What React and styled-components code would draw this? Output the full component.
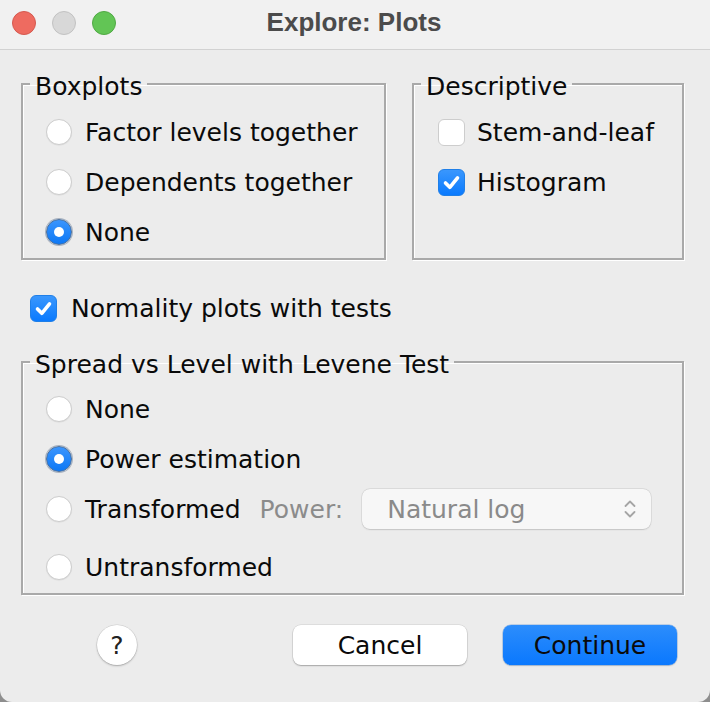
import React from "react"
import styled, { createGlobalStyle } from "styled-components"

const GlobalStyle = createGlobalStyle`
  html, body {
    margin: 0;
    padding: 0;
    background: #8e8e8e;
  }
  body {
    font-family: "DejaVu Sans", "Liberation Sans", sans-serif;
    -webkit-font-smoothing: antialiased;
  }
`

const Window = styled.div`
  width: 710px;
  height: 702px;
  background: #ececec;
  border-radius: 0 0 12px 12px;
  overflow: hidden;
  display: flex;
  flex-direction: column;
`

const TitleBar = styled.div`
  height: 49px;
  flex: none;
  background: #f1f1f1;
  border-bottom: 1px solid #d2d2d2;
  display: flex;
  align-items: center;
`

const Lights = styled.div`
  display: flex;
  gap: 16px;
  padding-left: 12px;
  margin-top: -4px;
`

const Light = styled.span`
  width: 22px;
  height: 22px;
  border-radius: 50%;
  background: ${p => p.$fill};
  border: 1px solid ${p => p.$edge};
`

const Title = styled.div`
  flex: 1;
  text-align: center;
  margin-left: -118px;
  margin-top: -5px;
  font-family: "Liberation Sans", Arial, sans-serif;
  font-weight: 700;
  font-size: 26px;
  color: #4b4b4b;
`

const Content = styled.div`
  flex: 1;
  display: flex;
  flex-direction: column;
  padding: 0 26px 0 21px;
  color: #0a0a0a;
  font-size: 25px;
`

const TopRow = styled.div`
  display: flex;
  gap: 26px;
  margin-top: 19px;
`

const Group = styled.fieldset`
  margin: 0;
  padding: 0;
  min-width: 0;
  border: 2px solid #a9a9a9;
  box-shadow: 1px 1px 0 #ffffff, inset 1px 1px 0 #ffffff;
  width: ${p => (p.$width ? `${p.$width}px` : "auto")};
  flex: ${p => (p.$grow ? "1" : "none")};
  box-sizing: border-box;
  margin-top: ${p => p.$mt || 0}px;
`

const Legend = styled.legend`
  margin-left: 7px;
  padding: 7px 5px 0;
  font-size: 25px;
  line-height: 22px;
`

const GroupBody = styled.div`
  display: flex;
  flex-direction: column;
  padding: ${p => p.$pt}px 12px 1px ${p => p.$pl}px;
`

const Row = styled.div`
  display: flex;
  align-items: center;
  height: 50px;
  gap: ${p => p.$gap || 13}px;
  margin-top: ${p => p.$mt || 0}px;
  flex: none;
  white-space: nowrap;
`

const RadioDot = styled.span`
  width: 26px;
  height: 26px;
  border-radius: 50%;
  box-sizing: border-box;
  flex: none;
  display: flex;
  align-items: center;
  justify-content: center;
  background: ${p => (p.$on ? "linear-gradient(#3b95fd, #0d78f5)" : "#ffffff")};
  border: 1px solid ${p => (p.$on ? "#4a6f9c" : "#cdcdcd")};
  box-shadow: ${p => (p.$on ? "0 0 0 1px rgba(90,110,140,0.45)" : "0 0.5px 1px rgba(0,0,0,0.08)")};

  &::after {
    content: "";
    display: ${p => (p.$on ? "block" : "none")};
    width: 10px;
    height: 10px;
    border-radius: 50%;
    background: #ffffff;
  }
`

const Box = styled.span`
  width: 27px;
  height: 27px;
  border-radius: 6px;
  box-sizing: border-box;
  flex: none;
  display: flex;
  align-items: center;
  justify-content: center;
  background: ${p => (p.$on ? "linear-gradient(#3a97fd, #0a7afe)" : "#ffffff")};
  border: 1px solid ${p => (p.$on ? "#1f7fe8" : "#cdcdcd")};
`

const Check = () => (
  <svg width="19" height="19" viewBox="0 0 19 19">
    <path d="M3.5 10 L7.8 14.3 L15.5 4.8" fill="none" stroke="#fff" strokeWidth="3.6" strokeLinecap="round" strokeLinejoin="round" />
  </svg>
)

const Radio = ({ on, children }) => (
  <Row>
    <RadioDot $on={on} />
    <span>{children}</span>
  </Row>
)

const CheckRow = ({ on, children, gap }) => (
  <Row $gap={gap}>
    <Box $on={on}>{on && <Check />}</Box>
    <span>{children}</span>
  </Row>
)

const NormalityRow = styled.div`
  margin-top: 23px;
  padding-left: 9px;
`

const PowerLabel = styled.span`
  color: #8b8b8b;
  margin-left: 6px;
`

const SelectBox = styled.div`
  flex: 1;
  height: 40px;
  margin-left: 6px;
  margin-right: 19px;
  box-sizing: border-box;
  background: #f7f7f7;
  border-radius: 8px;
  box-shadow: 0 0 0 0.5px rgba(0, 0, 0, 0.1), 0 0.5px 1.5px rgba(0, 0, 0, 0.12);
  display: flex;
  align-items: center;
  justify-content: space-between;
  padding: 0 14px 0 25px;
  color: #8a8a8a;
`

const Chevrons = () => (
  <svg width="14" height="24" viewBox="0 0 14 24">
    <path d="M2.5 9 L7 4.5 L11.5 9 M2.5 15 L7 19.5 L11.5 15" fill="none" stroke="#a5a5a5" strokeWidth="1.8" strokeLinecap="round" strokeLinejoin="round" />
  </svg>
)

const Footer = styled.div`
  display: flex;
  align-items: center;
  padding: 30px 5px 0 76px;
`

const HelpButton = styled.div`
  width: 40px;
  height: 40px;
  border-radius: 50%;
  background: #ffffff;
  box-shadow: 0 0 0 0.5px rgba(0, 0, 0, 0.12), 0 1px 2px rgba(0, 0, 0, 0.25);
  display: flex;
  align-items: center;
  justify-content: center;
  color: #222;
  font-size: 25px;
`

const Button = styled.div`
  width: 174px;
  height: 40px;
  box-sizing: border-box;
  border-radius: 8px;
  display: flex;
  align-items: center;
  justify-content: center;
  font-size: 25px;
  color: #0a0a0a;
  margin-left: ${p => p.$ml}px;
  background: ${p => (p.$primary ? "linear-gradient(#2c8dfc, #0a78fe)" : "#ffffff")};
  box-shadow: ${p =>
    p.$primary
      ? "0 0 0 0.5px rgba(0, 90, 200, 0.4), 0 1px 1.5px rgba(0,0,0,0.15)"
      : "0 0 0 0.5px rgba(0, 0, 0, 0.12), 0 1px 1.5px rgba(0, 0, 0, 0.25)"};
`

export default function App() {
  return (
    <>
      <GlobalStyle />
      <Window>
        <TitleBar>
          <Lights>
            <Light $fill="#ee6b60" $edge="#d5594f" />
            <Light $fill="#d8d8d8" $edge="#c2c2c2" />
            <Light $fill="#62c555" $edge="#50a944" />
          </Lights>
          <Title>Explore: Plots</Title>
        </TitleBar>
        <Content>
          <TopRow>
            <Group $width={365}>
              <Legend>Boxplots</Legend>
              <GroupBody $pt={9} $pl={23}>
                <Radio>Factor levels together</Radio>
                <Radio>Dependents together</Radio>
                <Radio on>None</Radio>
              </GroupBody>
            </Group>
            <Group $grow>
              <Legend>Descriptive</Legend>
              <GroupBody $pt={9} $pl={24}>
                <CheckRow gap={12}>Stem-and-leaf</CheckRow>
                <CheckRow on gap={12}>Histogram</CheckRow>
              </GroupBody>
            </Group>
          </TopRow>
          <NormalityRow>
            <CheckRow on gap={14}>Normality plots with tests</CheckRow>
          </NormalityRow>
          <Group $mt={14}>
            <Legend>Spread vs Level with Levene Test</Legend>
            <GroupBody $pt={8} $pl={23}>
              <Radio>None</Radio>
              <Radio on>Power estimation</Radio>
              <Row>
                <RadioDot />
                <span>Transformed</span>
                <PowerLabel>Power:</PowerLabel>
                <SelectBox>
                  <span>Natural log</span>
                  <Chevrons />
                </SelectBox>
              </Row>
              <Row $mt={8}>
                <RadioDot />
                <span>Untransformed</span>
              </Row>
            </GroupBody>
          </Group>
          <Footer>
            <HelpButton>?</HelpButton>
            <Button $ml={156}>Cancel</Button>
            <Button $primary $ml={36}>Continue</Button>
          </Footer>
        </Content>
      </Window>
    </>
  )
}
